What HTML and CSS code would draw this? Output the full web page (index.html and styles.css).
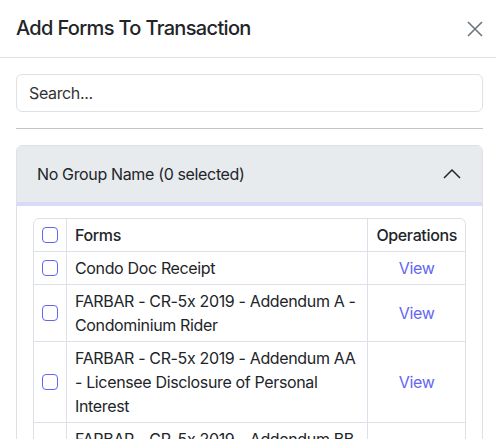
FILE: index.html
```html
<!DOCTYPE html>
<html lang="en">

    <head>
        <meta charset="UTF-8">
        <meta name="viewport" content="width=device-width, initial-scale=1.0">
        <title>Add Forms To Transaction</title>
        <link rel="stylesheet" href="styles.css">
    </head>

    <body>

        <div class="modal">
            <div class="modal-header">
                <h1 class="modal-title">Add Forms To Transaction</h1>
                <button class="close-btn" aria-label="Close">
                    <svg width="16" height="16" viewBox="0 0 16 16">
                        <path d="M1 1 L15 15 M15 1 L1 15" stroke="#6c757d" stroke-width="1.6" fill="none" />
                    </svg>
                </button>
            </div>

            <div class="modal-body">
                <input type="text" class="search" placeholder="Search...">
                <hr class="divider">

                <div class="accordion">
                    <div class="accordion-header">
                        <span>No Group Name (0 selected)</span>
                        <svg class="chevron" width="20" height="20" viewBox="0 0 20 20">
                            <path d="M2 14 L10 6 L18 14" stroke="#212529" stroke-width="1.5" fill="none" />
                        </svg>
                    </div>
                    <div class="accordion-body">
                        <table class="forms-table">
                            <thead>
                                <tr>
                                    <th class="check-col"><input type="checkbox" class="check"></th>
                                    <th class="forms-col">Forms</th>
                                    <th class="ops-col">Operations</th>
                                </tr>
                            </thead>
                            <tbody>
                                <tr>
                                    <td class="check-col"><input type="checkbox" class="check"></td>
                                    <td>Condo Doc Receipt</td>
                                    <td class="ops-col"><a href="#" class="view-link">View</a></td>
                                </tr>
                                <tr>
                                    <td class="check-col"><input type="checkbox" class="check"></td>
                                    <td>FARBAR - CR-5x 2019 - Addendum A - Condominium Rider</td>
                                    <td class="ops-col"><a href="#" class="view-link">View</a></td>
                                </tr>
                                <tr>
                                    <td class="check-col"><input type="checkbox" class="check"></td>
                                    <td>FARBAR - CR-5x 2019 - Addendum AA - Licensee Disclosure of Personal Interest</td>
                                    <td class="ops-col"><a href="#" class="view-link">View</a></td>
                                </tr>
                                <tr>
                                    <td class="check-col"><input type="checkbox" class="check"></td>
                                    <td>FARBAR - CR-5x 2019 - Addendum BB - Alternative and/or Additional Terms</td>
                                    <td class="ops-col"><a href="#" class="view-link">View</a></td>
                                </tr>
                            </tbody>
                        </table>
                    </div>
                </div>
            </div>
        </div>

    </body>

</html>
```

FILE: styles.css
```css
* {
    box-sizing: border-box;
}

body {
    margin: 0;
    font-family: Inter, "Noto Sans", Arial, sans-serif;
    font-size: 16px;
    line-height: 24px;
    letter-spacing: -0.022em;
    font-feature-settings: "calt" 0;
    color: #212529;
    background-color: #fff;
    overflow: hidden;
}

.modal-header {
    display: flex;
    align-items: center;
    justify-content: space-between;
    padding: 16px 13px 16px 16px;
    border-bottom: 1px solid #dee2e6;
}

.modal-title {
    margin: 0;
    font-size: 20px;
    font-weight: 500;
    line-height: 25px;
    letter-spacing: -0.033em;
}

.close-btn {
    display: flex;
    padding: 0;
    border: none;
    background: none;
    cursor: pointer;
}

.modal-body {
    padding: 16px 13px 16px 16px;
}

.search {
    display: block;
    width: 100%;
    height: 38px;
    padding: 6px 12px;
    font-family: inherit;
    font-size: 16px;
    letter-spacing: inherit;
    color: #212529;
    border: 1px solid #dee2e6;
    border-radius: 6px;
}

.search::placeholder {
    color: #333;
}

.divider {
    margin: 16px 0;
    border: none;
    border-top: 1px solid #c4c4c4;
}

.accordion {
    border: 1px solid #dfe0e6;
    border-radius: 6px;
    overflow: hidden;
}

.accordion-header {
    position: relative;
    z-index: 1;
    display: flex;
    align-items: center;
    justify-content: space-between;
    padding: 16px 20px;
    background-color: #e8ebee;
    box-shadow: 0 4px 0 0 #d9d9f8;
}

.chevron {
    display: block;
}

.accordion-body {
    padding: 16px 16px 0 16px;
}

.forms-table {
    width: 100%;
    border-collapse: separate;
    border-spacing: 0;
    border: 1px solid #dfdfea;
    border-radius: 6px;
}

.forms-table th,
.forms-table td {
    padding: 4px 8px;
    border-bottom: 1px solid #dfdfea;
    border-left: 1px solid #dfdfea;
    text-align: left;
    vertical-align: middle;
}

.forms-table th:first-child,
.forms-table td:first-child {
    border-left: none;
}

.forms-table th {
    font-weight: 500;
}

.check-col {
    width: 32px;
}

.ops-col {
    width: 1%;
    white-space: nowrap;
    text-align: center !important;
}

.check {
    display: block;
    appearance: none;
    width: 16px;
    height: 16px;
    margin: 0;
    border: 1px solid #6366f1;
    border-radius: 4px;
    background: #fff;
}

.view-link {
    color: #6366f1;
    text-decoration: none;
}
```
